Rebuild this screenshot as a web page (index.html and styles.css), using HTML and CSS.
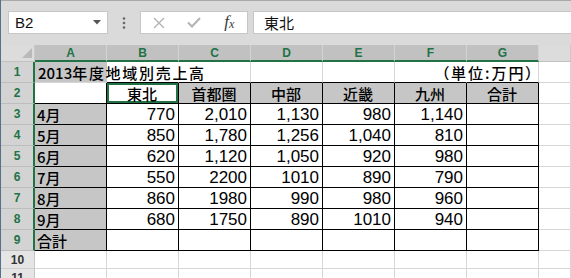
FILE: index.html
```html
<!DOCTYPE html>
<html lang="ja">
<head>
    <meta charset="UTF-8">
    <title>Sheet1</title>
    <link rel="stylesheet" href="styles.css">
</head>
<body>
    <div class="window">
        <div class="formula-bar">
            <div class="name-box">
                <span>B2</span>
                <svg width="8" height="5" viewBox="0 0 8 5"><path d="M0 0h8L4 4.5z" fill="#555"/></svg>
            </div>
            <div class="grip">
                <svg width="4" height="12" viewBox="0 0 4 12"><circle cx="2" cy="1.5" r="1.3" fill="#666"/><circle cx="2" cy="6" r="1.3" fill="#666"/><circle cx="2" cy="10.5" r="1.3" fill="#666"/></svg>
            </div>
            <div class="fx-buttons">
                <svg width="12" height="12" viewBox="0 0 12 12"><path d="M1 1l10 10M11 1L1 11" stroke="#b3b3b3" stroke-width="1.4" fill="none"/></svg>
                <svg width="14" height="11" viewBox="0 0 14 11"><path d="M1 5.5l4 4L13 1" stroke="#b3b3b3" stroke-width="2" fill="none"/></svg>
                <span class="fx">f<sub>x</sub></span>
            </div>
            <div class="formula-input">東北</div>
        </div>

        <div class="sheet">
            <!-- column headers -->
            <div class="corner">
                <svg width="10" height="10" viewBox="0 0 10 10"><path d="M10 0v10H0z" fill="#b9b9b9"/></svg>
            </div>
            <div class="col-head sel">A</div>
            <div class="col-head sel">B</div>
            <div class="col-head sel">C</div>
            <div class="col-head sel">D</div>
            <div class="col-head sel">E</div>
            <div class="col-head sel">F</div>
            <div class="col-head sel">G</div>
            <div class="col-head"></div>

            <!-- row 1 -->
            <div class="row-head sel">1</div>
            <div class="cell fill no-r title">2013<span class="wide">年度地域別売上高</span></div>
            <div class="cell no-r bb"></div>
            <div class="cell bb"></div>
            <div class="cell bb"></div>
            <div class="cell bb"></div>
            <div class="cell no-r bb"></div>
            <div class="cell bb end"><span class="wide unit">（単位:万円）</span></div>
            <div class="cell"></div>

            <!-- row 2 -->
            <div class="row-head sel">2</div>
            <div class="cell tb"></div>
            <div class="cell tb mid active">東北</div>
            <div class="cell tb fill mid">首都圏</div>
            <div class="cell tb fill mid">中部</div>
            <div class="cell tb fill mid">近畿</div>
            <div class="cell tb fill mid">九州</div>
            <div class="cell tb fill mid">合計</div>
            <div class="cell"></div>

            <!-- row 3 -->
            <div class="row-head sel">3</div>
            <div class="cell tb fill">4月</div>
            <div class="cell tb num">770</div>
            <div class="cell tb num">2,010</div>
            <div class="cell tb num">1,130</div>
            <div class="cell tb num">980</div>
            <div class="cell tb num">1,140</div>
            <div class="cell tb"></div>
            <div class="cell"></div>

            <!-- row 4 -->
            <div class="row-head sel">4</div>
            <div class="cell tb fill">5月</div>
            <div class="cell tb num">850</div>
            <div class="cell tb num">1,780</div>
            <div class="cell tb num">1,256</div>
            <div class="cell tb num">1,040</div>
            <div class="cell tb num">810</div>
            <div class="cell tb"></div>
            <div class="cell"></div>

            <!-- row 5 -->
            <div class="row-head sel">5</div>
            <div class="cell tb fill">6月</div>
            <div class="cell tb num">620</div>
            <div class="cell tb num">1,120</div>
            <div class="cell tb num">1,050</div>
            <div class="cell tb num">920</div>
            <div class="cell tb num">980</div>
            <div class="cell tb"></div>
            <div class="cell"></div>

            <!-- row 6 -->
            <div class="row-head sel">6</div>
            <div class="cell tb fill">7月</div>
            <div class="cell tb num">550</div>
            <div class="cell tb num">2200</div>
            <div class="cell tb num">1010</div>
            <div class="cell tb num">890</div>
            <div class="cell tb num">790</div>
            <div class="cell tb"></div>
            <div class="cell"></div>

            <!-- row 7 -->
            <div class="row-head sel">7</div>
            <div class="cell tb fill">8月</div>
            <div class="cell tb num">860</div>
            <div class="cell tb num">1980</div>
            <div class="cell tb num">990</div>
            <div class="cell tb num">980</div>
            <div class="cell tb num">960</div>
            <div class="cell tb"></div>
            <div class="cell"></div>

            <!-- row 8 -->
            <div class="row-head sel">8</div>
            <div class="cell tb fill">9月</div>
            <div class="cell tb num">680</div>
            <div class="cell tb num">1750</div>
            <div class="cell tb num">890</div>
            <div class="cell tb num">1010</div>
            <div class="cell tb num">940</div>
            <div class="cell tb"></div>
            <div class="cell"></div>

            <!-- row 9 -->
            <div class="row-head sel">9</div>
            <div class="cell tb fill">合計</div>
            <div class="cell tb"></div>
            <div class="cell tb"></div>
            <div class="cell tb"></div>
            <div class="cell tb"></div>
            <div class="cell tb"></div>
            <div class="cell tb"></div>
            <div class="cell"></div>

            <!-- row 10 -->
            <div class="row-head">10</div>
            <div class="cell"></div>
            <div class="cell"></div>
            <div class="cell"></div>
            <div class="cell"></div>
            <div class="cell"></div>
            <div class="cell"></div>
            <div class="cell"></div>
            <div class="cell"></div>

            <!-- row 11 -->
            <div class="row-head">11</div>
            <div class="cell"></div>
            <div class="cell"></div>
            <div class="cell"></div>
            <div class="cell"></div>
            <div class="cell"></div>
            <div class="cell"></div>
            <div class="cell"></div>
            <div class="cell"></div>
        </div>
    </div>
</body>
</html>
```

FILE: styles.css
```css
body {
    margin: 0;
    background: #ffffff;
    font-family: "Liberation Sans", sans-serif;
}
.window {
    width: 571px;
    height: 278px;
    overflow: hidden;
    box-sizing: border-box;
    border-left: 1px solid #56718a;
}

/* formula bar */
.formula-bar {
    display: flex;
    align-items: flex-start;
    height: 45px;
    box-sizing: border-box;
    padding: 10px 0 0 7px;
    background: #dadada;
    border-top: 1px solid #a9a9a9;
}
.name-box {
    width: 100px;
    height: 23px;
    box-sizing: border-box;
    display: flex;
    align-items: center;
    justify-content: space-between;
    padding: 0 6px 0 6px;
    background: #ffffff;
    border: 1px solid #c6c6c6;
    font-size: 15px;
    color: #111;
}
.grip {
    width: 32px;
    height: 23px;
    display: flex;
    align-items: center;
    justify-content: center;
}
.fx-buttons {
    width: 108px;
    height: 23px;
    box-sizing: border-box;
    display: grid;
    grid-template-columns: repeat(3, 1fr);
    align-items: center;
    justify-items: center;
    background: #ffffff;
    border: 1px solid #c6c6c6;
}
.fx {
    font-family: "Liberation Serif", serif;
    font-style: italic;
    font-size: 17px;
    color: #3a3a3a;
    line-height: 1;
    margin-top: -2px;
}
.fx sub {
    font-size: 12px;
    vertical-align: -1px;
}
.formula-input {
    flex: 1;
    height: 23px;
    box-sizing: border-box;
    margin-left: 5px;
    padding-left: 10px;
    background: #ffffff;
    border: 1px solid #c6c6c6;
    border-right: none;
    font-family: "Noto Sans CJK JP", sans-serif;
    font-size: 15px;
    line-height: 21px;
    color: #111;
}

/* sheet grid */
.sheet {
    display: grid;
    grid-template-columns: 34px repeat(7, 72px) 1fr;
    grid-template-rows: 17px repeat(9, 21px) 18px 18px;
}
.corner {
    background: #dcdcdc;
    border-right: 1px solid #c9c9c9;
    border-bottom: 1px solid #c2c2c2;
    display: flex;
    align-items: flex-end;
    justify-content: flex-end;
    padding: 0 2px 3px 0;
}
.col-head {
    background: #dcdcdc;
    border-right: 1px solid #c9c9c9;
    border-bottom: 1px solid #c2c2c2;
    display: flex;
    align-items: center;
    justify-content: center;
    font-size: 12px;
    font-weight: bold;
    color: #333;
}
.col-head.sel {
    background: #c1c1c1;
    border-right-color: #d3d3d3;
    border-bottom: 2px solid #217346;
    color: #217346;
}
.row-head {
    background: #e5e5e5;
    border-right: 1px solid #c6c6c6;
    border-bottom: 1px solid #cfcfcf;
    display: flex;
    align-items: center;
    justify-content: center;
    font-size: 12px;
    font-weight: bold;
    color: #333;
}
.row-head.sel {
    background: #d3d3d3;
    border-right: 2px solid #217346;
    border-bottom-color: #bdbdbd;
    color: #217346;
}
.corner, .col-head, .row-head, .cell {
    box-sizing: border-box;
}

.cell {
    display: flex;
    align-items: flex-end;
    padding: 0 3px 0 2px;
    border-right: 1px solid #d6d6d6;
    border-bottom: 1px solid #d6d6d6;
    font-family: "Noto Sans CJK JP", sans-serif;
    font-size: 15px;
    font-weight: 500;
    line-height: 19px;
    color: #000;
    white-space: nowrap;
}
.cell.tb {
    border-right-color: #000;
    border-bottom-color: #000;
}
.cell.bb {
    border-bottom-color: #000;
}
.cell.no-r {
    border-right-color: transparent;
}
.fill {
    background: #c6c6c6;
}
.mid {
    justify-content: center;
}
.num {
    justify-content: flex-end;
    font-family: "Liberation Sans Narrow", "Liberation Sans", sans-serif;
    font-size: 17px;
    font-weight: normal;
}
.end {
    justify-content: flex-end;
}
.wide {
    letter-spacing: 1.7px;
}
.unit {
    font-feature-settings: "palt";
    letter-spacing: 2px;
}
.title {
    padding-left: 3px;
}
.active {
    box-shadow: inset 0 0 0 2px #217346;
}
```
